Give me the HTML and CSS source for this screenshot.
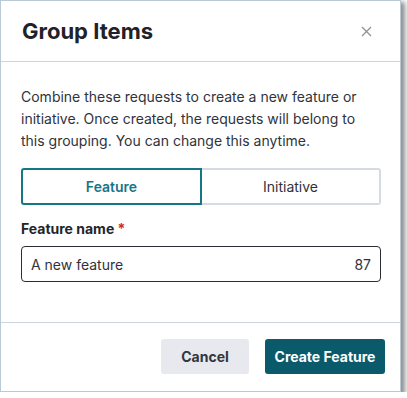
FILE: index.html
```html
<!DOCTYPE html>
<html>
<head>
<meta charset="utf-8">
<link rel="stylesheet" href="styles.css">
</head>
<body>
<div class="dialog">
  <div class="header">
    <h1 class="title">Group Items</h1>
    <svg class="close" width="11" height="11" viewBox="0 0 11 11"><path d="M1 1 L10 10 M10 1 L1 10" stroke="#8b9199" stroke-width="1.3" fill="none"/></svg>
  </div>
  <div class="body">
    <p class="desc">Combine these requests to create a new feature or initiative. Once created, the requests will belong to this grouping. You can change this anytime.</p>
    <div class="segmented">
      <div class="seg seg-active">Feature</div>
      <div class="seg">Initiative</div>
    </div>
    <div class="label">Feature name <span class="req">*</span></div>
    <div class="input">
      <span>A new feature</span>
      <span>87</span>
    </div>
  </div>
  <div class="footer">
    <div class="btn btn-cancel">Cancel</div>
    <div class="btn btn-primary">Create Feature</div>
  </div>
</div>
</body>
</html>
```

FILE: styles.css
```css
html, body {
  margin: 0;
  padding: 0;
  background: #ffffff;
  font-family: Inter, "Noto Sans", sans-serif;
}
.dialog {
  width: 399px;
  height: 390px;
  border: 1px solid #b9cad6;
  background: #ffffff;
  box-shadow: 3px 3px 5px 1px rgba(0,0,0,0.45);
  display: flex;
  flex-direction: column;
}
.header {
  height: 60px;
  border-bottom: 1px solid #cdd4dc;
  display: flex;
  align-items: center;
  justify-content: space-between;
  padding: 0 28px 0 21px;
}
.title {
  margin: 0;
  font-size: 22px;
  font-weight: 700;
  color: #1f2228;
}
.close {
  display: block;
  margin-top: 1px;
}
.body {
  padding: 24px 19px 40px 20px;
  border-bottom: 1px solid #cdd4dc;
}
.desc {
  margin: 0;
  font-size: 14px;
  line-height: 22px;
  color: #30333a;
}
.segmented {
  margin-top: 16px;
  display: flex;
  height: 37px;
}
.seg {
  flex: 1;
  display: flex;
  align-items: center;
  justify-content: center;
  font-size: 14px;
  color: #30333a;
  border: 2px solid #d6dbe2;
  border-left: none;
  border-radius: 0 3px 3px 0;
}
.seg-active {
  border: 2px solid #177686;
  border-radius: 3px 0 0 3px;
  color: #177686;
  font-weight: 600;
}
.label {
  margin-top: 14px;
  font-size: 14px;
  line-height: 20px;
  font-weight: 700;
  color: #22252b;
}
.req {
  color: #d9262c;
}
.input {
  margin-top: 7px;
  height: 34px;
  border: 1px solid #2a2d33;
  border-radius: 4px;
  display: flex;
  align-items: center;
  justify-content: space-between;
  padding: 0 9px 0 9px;
  font-size: 14px;
  color: #30333a;
}
.footer {
  display: flex;
  justify-content: flex-end;
  gap: 16px;
  padding: 16px 15px 0 0;
}
.btn {
  height: 35px;
  border-radius: 3px;
  display: flex;
  align-items: center;
  justify-content: center;
  font-size: 14px;
  font-weight: 700;
}
.btn-cancel {
  width: 88px;
  background: #e8e9ee;
  color: #33363c;
}
.btn-primary {
  width: 120px;
  background: #0b5a6b;
  color: #ffffff;
}
```
